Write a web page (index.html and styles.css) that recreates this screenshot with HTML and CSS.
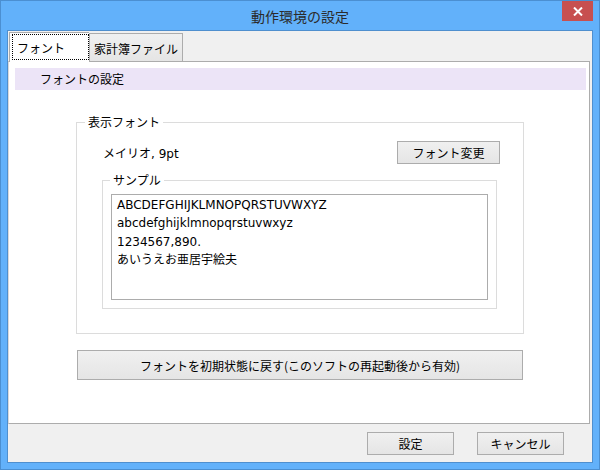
FILE: index.html
```html
<!DOCTYPE html>
<html lang="ja">
<head>
    <meta charset="UTF-8">
    <title>動作環境の設定</title>
    <link rel="stylesheet" href="styles.css">
</head>
<body>

<div class="window">
    <div class="titlebar">
        <span class="title">動作環境の設定</span>
        <button class="close-btn">
            <svg width="10" height="9" viewBox="0 0 10 9"><path d="M1 0.5 L9 8.5 M9 0.5 L1 8.5" stroke="#fff" stroke-width="2"/></svg>
        </button>
    </div>

    <div class="client">
        <!-- タブ -->
        <div class="tabs">
            <div class="tab active"><span class="focus">フォント</span></div>
            <div class="tab">家計簿ファイル</div>
        </div>

        <div class="panel">
            <div class="section-head">フォントの設定</div>

            <fieldset class="group font-group">
                <legend>表示フォント</legend>
                <div class="group-body">
                    <div class="font-row">
                        <span class="font-name">メイリオ, 9pt</span>
                        <button class="btn change-btn">フォント変更</button>
                    </div>

                    <fieldset class="group sample-group">
                        <legend>サンプル</legend>
                        <div class="sample-box">
                            <div>ABCDEFGHIJKLMNOPQRSTUVWXYZ</div>
                            <div>abcdefghijklmnopqrstuvwxyz</div>
                            <div>1234567,890.</div>
                            <div>あいうえお亜居宇絵夫</div>
                        </div>
                    </fieldset>
                </div>
            </fieldset>

            <button class="btn reset-btn">フォントを初期状態に戻す(このソフトの再起動後から有効)</button>
        </div>

        <!-- 設定 / キャンセル -->
        <div class="footer">
            <button class="btn footer-btn">設定</button>
            <button class="btn footer-btn">キャンセル</button>
        </div>
    </div>
</div>

</body>
</html>
```

FILE: styles.css
```css
body {
    margin: 0;
    padding: 0;
    font-family: "DejaVu Sans", "Noto Sans CJK JP", sans-serif;
    font-size: 12px;
    color: #000;
}

.window {
    box-sizing: border-box;
    width: 600px;
    height: 470px;
    background-color: #62b1fa;
    border: 1px solid #4b8fd1;
    padding: 0 6px 6px 6px;
}

.titlebar {
    position: relative;
    height: 29px;
    margin: 0 -6px;
    text-align: center;
}

.title {
    display: inline-block;
    font-family: "Noto Sans CJK JP", sans-serif;
    font-size: 14px;
    line-height: 31px;
    color: #2b2b2b;
}

.close-btn {
    position: absolute;
    top: 0;
    right: 6px;
    width: 31px;
    height: 20px;
    padding: 0;
    border: none;
    background-color: #c75050;
    display: flex;
    align-items: center;
    justify-content: center;
}

.client {
    box-sizing: border-box;
    width: 586px;
    height: 433px;
    background-color: #f0f0f0;
    border: 1px solid #4f8fce;
}

/* タブ */
.tabs {
    display: flex;
    align-items: flex-end;
    height: 29px;
    margin-top: 1px;
    padding-left: 1px;
}

.tab {
    box-sizing: border-box;
    height: 28px;
    padding: 0 4px;
    border: 1px solid #acacac;
    border-bottom: none;
    background: linear-gradient(#f0f0f0, #e5e5e5);
    line-height: 30px;
    font-family: "Noto Sans CJK JP", sans-serif;
}

.tab.active {
    position: relative;
    z-index: 1;
    width: 80px;
    height: 30px;
    margin-bottom: -1px;
    padding: 1px 1px 1px 2px;
    border-right: none;
    background: #fff;
    line-height: 26px;
}

.focus {
    display: block;
    height: 26px;
    padding-left: 4px;
    border: 1px dotted #000;
    box-sizing: border-box;
    width: 77px;
}

.panel {
    box-sizing: border-box;
    width: 582px;
    height: 363px;
    background-color: #fff;
    border: 1px solid #acacac;
    border-left-color: #d9d9d9;
}

.section-head {
    height: 22px;
    margin: 6px 3px 0 6px;
    padding-left: 25px;
    background-color: #ece4f7;
    line-height: 22px;
    font-family: "Noto Sans CJK JP", sans-serif;
}

.group {
    margin: 0;
    padding: 0;
    border: 1px solid #dcdcdc;
}

.group legend {
    padding: 0 3px;
    line-height: 16px;
    font-family: "Noto Sans CJK JP", sans-serif;
}

.font-group {
    width: 448px;
    box-sizing: border-box;
    margin: 24px 0 0 67px;
}

.font-group > legend {
    margin-left: 8px;
}

.group-body {
    padding: 0 0 24px 25px;
}

.font-row {
    display: flex;
    align-items: center;
    justify-content: space-between;
    width: 398px;
    margin-top: 11px;
    padding-left: 1px;
    box-sizing: border-box;
}

.btn {
    border: 1px solid #acacac;
    background: linear-gradient(#f0f0f0, #e5e5e5);
    font-family: "Noto Sans CJK JP", sans-serif;
    font-size: 12px;
    color: #000;
    padding: 0;
}

.change-btn {
    width: 103px;
    height: 23px;
}

.sample-group {
    width: 395px;
    box-sizing: border-box;
    margin-top: 8px;
    padding: 0 0 8px 8px;
}

.sample-group > legend {
    margin-left: -1px;
}

.sample-box {
    box-sizing: border-box;
    width: 377px;
    height: 106px;
    margin-top: 6px;
    padding: 1px 5px;
    border: 1px solid #acacac;
    line-height: 18.3px;
}

.reset-btn {
    display: block;
    width: 446px;
    height: 30px;
    margin: 16px 0 0 68px;
}

.footer {
    display: flex;
    justify-content: flex-end;
    gap: 23px;
    margin-top: 8px;
    padding-right: 28px;
}

.footer-btn {
    width: 87px;
    height: 23px;
}
```
